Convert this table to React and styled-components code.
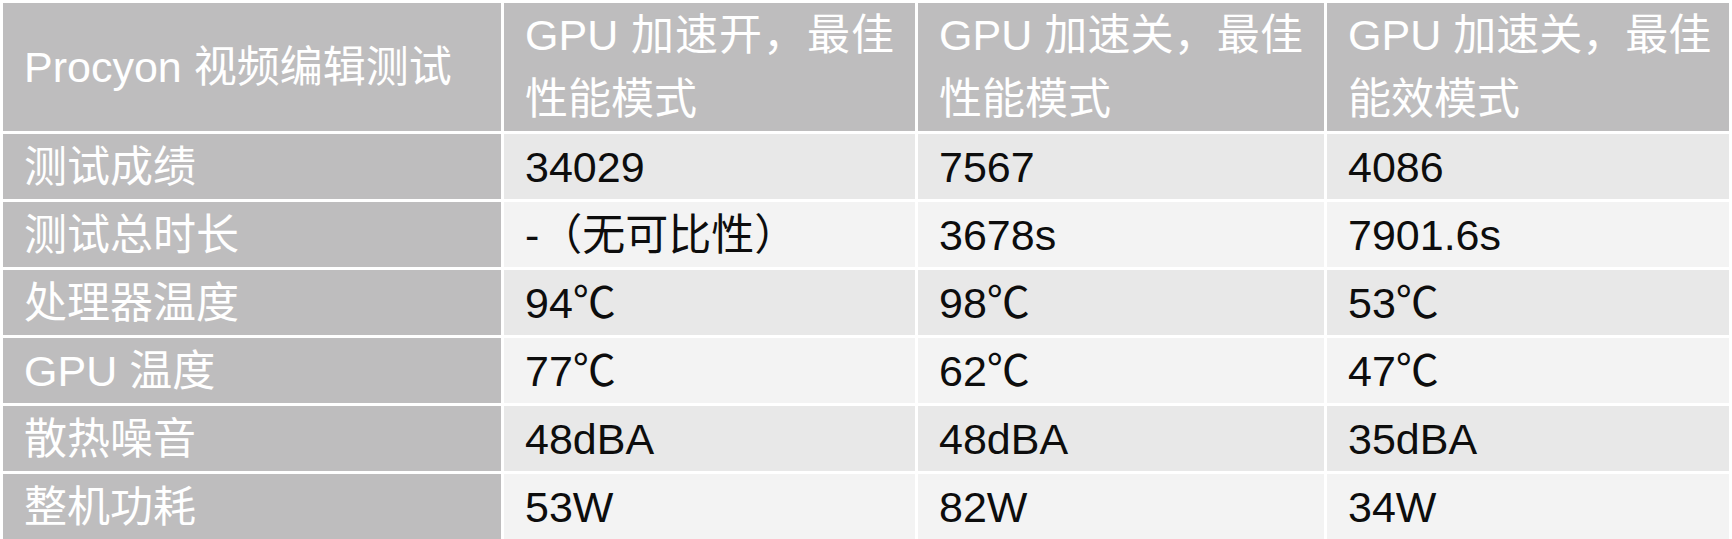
import React from "react";
import styled, { createGlobalStyle } from "styled-components";

const GlobalStyle = createGlobalStyle`
  html, body {
    margin: 0;
    padding: 0;
    background: #ffffff;
    overflow: hidden;
  }
  body {
    font-family: "Liberation Sans", "Noto Sans CJK SC", sans-serif;
  }
`;

const Table = styled.div`
  display: grid;
  grid-template-columns: 498px 411px 406px 402px;
  grid-template-rows: 128px repeat(6, 65px);
  gap: 3px;
  padding: 3px 3px 0 3px;
  width: 1732px;
  height: 539px;
  box-sizing: border-box;
  background: #ffffff;
`;

const Cell = styled.div`
  display: flex;
  flex-direction: column;
  justify-content: center;
  padding: 0 21px;
  box-sizing: border-box;
  font-size: 43px;
  line-height: 64px;
  white-space: nowrap;
  background: ${(p) =>
    p.$grey ? "#bebdbe" : p.$odd ? "#e8e8e8" : "#f3f3f3"};
  color: ${(p) => (p.$grey ? "#ffffff" : "#0d0d0d")};
  overflow: hidden;
`;

const HeadLine = styled.span`
  display: block;
  width: 100%;
  text-align: ${(p) => (p.$fill ? "justify" : "left")};
  text-align-last: ${(p) => (p.$fill ? "justify" : "left")};
`;

const heads = [
  ["GPU 加速开，最佳", "性能模式"],
  ["GPU 加速关，最佳", "性能模式"],
  ["GPU 加速关，最佳", "能效模式"],
];

const rows = [
  ["测试成绩", "34029", "7567", "4086"],
  ["测试总时长", "-（无可比性）", "3678s", "7901.6s"],
  ["处理器温度", "94℃", "98℃", "53℃"],
  ["GPU 温度", "77℃", "62℃", "47℃"],
  ["散热噪音", "48dBA", "48dBA", "35dBA"],
  ["整机功耗", "53W", "82W", "34W"],
];

export default function App() {
  return (
    <>
      <GlobalStyle />
      <Table>
        <Cell $grey>
          <HeadLine>Procyon 视频编辑测试</HeadLine>
        </Cell>
        {heads.map(([first, second], k) => (
          <Cell $grey key={k}>
            <HeadLine $fill>{first}</HeadLine>
            <HeadLine>{second}</HeadLine>
          </Cell>
        ))}
        {rows.map((row, i) =>
          row.map((value, j) => (
            <Cell key={i + "-" + j} $grey={j === 0} $odd={i % 2 === 0}>
              {value}
            </Cell>
          ))
        )}
      </Table>
    </>
  );
}
